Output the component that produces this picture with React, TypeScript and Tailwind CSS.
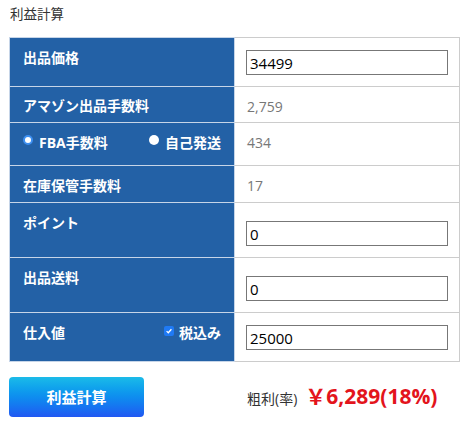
import React from 'react';

const font = { fontFamily: '"Open Sans", "Noto Sans CJK JP", sans-serif' };

const Label: React.FC<{ children: React.ReactNode; h: string }> = ({ children, h }) => (
  <td className={`${h} align-top bg-[#2361a6] border border-[#c6d5e8] pl-[13px] pr-[12px] pt-[10px] text-[14px] leading-[20px] font-bold text-white`}>
    {children}
  </td>
);

const Field: React.FC<{ value: string; pt: string }> = ({ value, pt }) => (
  <td className={`align-top border border-[#cccccc] pl-[11px] ${pt}`}>
    <input
      defaultValue={value}
      className="block w-[202px] h-[25px] border border-[#777777] px-[3px] text-[15px] text-black outline-none"
    />
  </td>
);

const Value: React.FC<{ value: string }> = ({ value }) => (
  <td className="align-top border border-[#cccccc] pl-[12px] pt-[10px] text-[14px] leading-[20px] text-[#777777]">
    {value}
  </td>
);

export default function App() {
  return (
    <div className="w-[473px] h-[423px] bg-white px-[9px] pt-[4px]" style={font}>
      <div className="pl-[1px] text-[13.5px] leading-[20px] text-[#333333]">利益計算</div>

      <table className="mt-[13px] w-[450px] border-collapse table-fixed">
        <colgroup>
          <col className="w-[225px]" />
          <col className="w-[225px]" />
        </colgroup>
        <tbody>
          <tr>
            <Label h="h-[49px]">出品価格</Label>
            <Field value="34499" pt="pt-[12px]" />
          </tr>
          <tr>
            <Label h="h-[36px]">
              <span className="relative -top-[1px]">アマゾン出品手数料</span>
            </Label>
            <Value value="2,759" />
          </tr>
          <tr>
            <Label h="h-[43px]">
              <div className="flex items-center justify-between">
                <span className="flex items-center gap-[6px]">
                  <span className="relative -top-[3px] shrink-0 w-[10px] h-[10px] rounded-full border-[2px] border-[#3d8ff0] bg-white" />
                  FBA手数料
                </span>
                <span className="flex items-center gap-[6px] pr-[1px]">
                  <span className="relative -top-[3px] shrink-0 w-[10px] h-[10px] rounded-full bg-white" />
                  自己発送
                </span>
              </div>
            </Label>
            <Value value="434" />
          </tr>
          <tr>
            <Label h="h-[37px]">在庫保管手数料</Label>
            <Value value="17" />
          </tr>
          <tr>
            <Label h="h-[55px]">ポイント</Label>
            <Field value="0" pt="pt-[18px]" />
          </tr>
          <tr>
            <Label h="h-[55px]">出品送料</Label>
            <Field value="0" pt="pt-[18px]" />
          </tr>
          <tr>
            <Label h="h-[49px]">
              <div className="flex items-center justify-between">
                <span>仕入値</span>
                <span className="flex items-center gap-[5px] pr-[1px]">
                  <span className="relative -top-[2px] shrink-0 w-[10px] h-[10px] rounded-[2px] bg-[#1f7af5] flex items-center justify-center">
                    <svg viewBox="0 0 10 10" className="w-[8px] h-[8px]">
                      <path d="M2 5.2 L4.1 7.2 L8 2.8" fill="none" stroke="white" strokeWidth="1.6" />
                    </svg>
                  </span>
                  税込み
                </span>
              </div>
            </Label>
            <Field value="25000" pt="pt-[12px]" />
          </tr>
        </tbody>
      </table>

      <div className="mt-[15px] flex items-center">
        <button className="w-[135px] h-[40px] rounded-[4px] bg-gradient-to-b from-[#1cbbe8] to-[#2157f2] text-white text-[15px] font-bold">
          利益計算
        </button>
        <div className="ml-[103px] flex items-baseline gap-[8px]">
          <span className="text-[14px] text-[#333333]">粗利(率)</span>
          <span className="text-[21px] font-bold text-[#e3141c]">￥6,289(18%)</span>
        </div>
      </div>
    </div>
  );
}
